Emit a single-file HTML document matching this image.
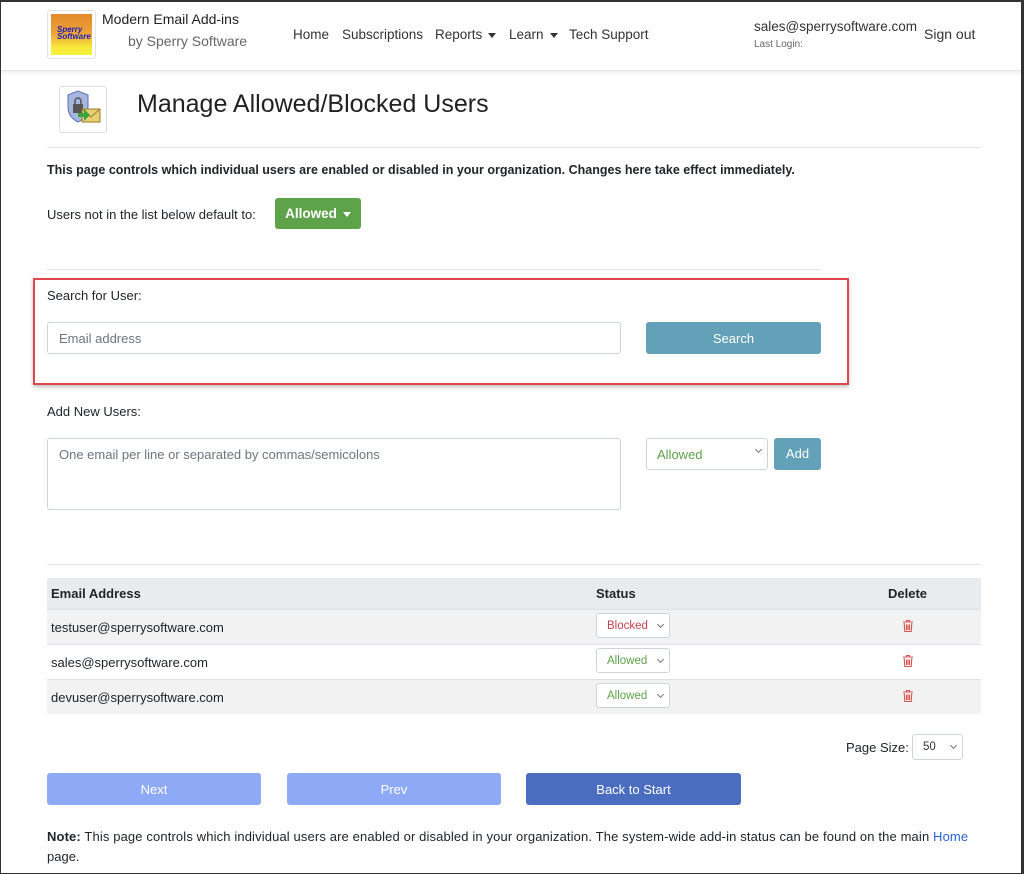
<!DOCTYPE html>
<html><head><meta charset="utf-8"><style>
*{box-sizing:border-box;margin:0;padding:0}
body{width:1024px;height:874px;overflow:hidden;background:#fff;font-family:"Liberation Sans",sans-serif;color:#212529;font-size:13px;position:relative}
.frame{position:absolute;left:0;top:0;width:1024px;height:874px;border:1px solid #333;border-right:3px solid #333;border-top:2px solid #333;pointer-events:none;z-index:10}
.a{position:absolute;white-space:nowrap}
.hdr{position:absolute;left:0;top:0;width:1024px;height:71px;background:#fff;box-shadow:0 2px 4px rgba(0,0,0,.08);border-bottom:1px solid #e5e5e5}
.nav{font-size:13.5px;color:#333}
.caret{display:inline-block;border-top:5px solid #333;border-left:4px solid transparent;border-right:4px solid transparent;vertical-align:middle;margin-left:6px}
.hr{position:absolute;height:1px;background:#e2e2e2}
.inp{position:absolute;border:1px solid #ced4da;border-radius:3px;background:#fff;color:#6c757d;font-size:13px;padding-left:11px}
.btn{position:absolute;border-radius:3px;color:#fff;font-size:13px;text-align:center}
.sel{position:absolute;border:1px solid #ced4da;border-radius:3px;background:#fff;font-size:11.5px;padding-left:10px;line-height:24px}
.sel:after{content:"";position:absolute;right:6px;top:8px;width:4px;height:4px;border-right:1px solid #777;border-bottom:1px solid #777;transform:rotate(45deg)}
.row{position:absolute;left:47px;width:934px;height:35px;border-top:1px solid #dee2e6}
.trash{position:absolute;width:10px;height:12px}
</style></head><body>
<div class="hdr"></div>
<div class="a" style="left:47px;top:10px;width:49px;height:49px;border:1px solid #e3e3e3;border-radius:3px;padding:3px"><div style="width:41px;height:41px;background:linear-gradient(180deg,#e4882a 0%,#eda53a 50%,#f7e83a 80%,#f4f23c 100%)"><div style="font:italic bold 8px 'Liberation Sans';color:#1a1ac0;padding:12px 0 0 6px;line-height:7px">Sperry<br>Software</div></div></div>
<div class="a" style="left:102px;top:11px;font-size:14px;color:#222">Modern Email Add-ins</div>
<div class="a" style="left:128px;top:33px;font-size:14px;color:#666">by Sperry Software</div>
<div class="a nav" style="left:293px;top:27px">Home</div>
<div class="a nav" style="left:342px;top:27px">Subscriptions</div>
<div class="a nav" style="left:435px;top:27px">Reports<span class="caret"></span></div>
<div class="a nav" style="left:509px;top:27px">Learn<span class="caret"></span></div>
<div class="a nav" style="left:569px;top:27px">Tech Support</div>
<div class="a" style="left:754px;top:19px;font-size:13.5px;color:#333">sales@sperrysoftware.com</div>
<div class="a" style="left:754px;top:39px;font-size:10px;color:#666">Last Login:</div>
<div class="a nav" style="left:924px;top:26px;font-size:14px">Sign out</div>

<div class="a" style="left:59px;top:86px;width:48px;height:47px;border:1px solid #ddd;border-radius:3px">
<svg width="46" height="45" viewBox="0 0 46 45"><path d="M8 8 L18 4 L28 8 L28 20 Q28 30 18 35 Q8 30 8 20Z" fill="#a7b6de" stroke="#5a6fb5"/><rect x="13" y="17" width="10" height="9" fill="#555"/><path d="M15 17 v-3 a3 3 0 0 1 6 0 v3" fill="none" stroke="#555" stroke-width="1.5"/><rect x="22" y="22" width="18" height="13" fill="#e8cf73" stroke="#9a7c2a"/><path d="M22 22 L31 30 L40 22" fill="none" stroke="#9a7c2a"/><path d="M18 26 h6 v-4 l6 6 -6 6 v-4 h-6z" fill="#3aa43a"/></svg></div>
<div class="a" style="left:137px;top:90px;font-size:25px;color:#222">Manage Allowed/Blocked Users</div>
<div class="hr" style="left:47px;top:147px;width:934px"></div>
<div class="a" style="left:47px;top:163px;font-weight:bold;font-size:12.5px">This page controls which individual users are enabled or disabled in your organization. Changes here take effect immediately.</div>
<div class="a" style="left:47px;top:207px">Users not in the list below default to:</div>
<div class="btn" style="left:275px;top:198px;width:86px;height:31px;background:#5ea34a;line-height:31px;font-weight:bold;font-size:13.5px">Allowed<span class="caret" style="border-top-color:#fff"></span></div>
<div class="hr" style="left:47px;top:269px;width:774px"></div>
<div class="a" style="left:33px;top:278px;width:816px;height:107px;border:2px solid #e0474c;box-shadow:0 2px 4px rgba(0,0,0,.25)"></div>
<div class="a" style="left:47px;top:288px">Search for User:</div>
<div class="inp" style="left:47px;top:322px;width:574px;height:32px;line-height:31px">Email address</div>
<div class="btn" style="left:646px;top:322px;width:175px;height:32px;background:#62a1b7;line-height:33px">Search</div>
<div class="a" style="left:47px;top:404px">Add New Users:</div>
<div class="inp" style="left:47px;top:438px;width:574px;height:72px;padding-top:8px">One email per line or separated by commas/semicolons</div>
<div class="sel" style="left:646px;top:438px;width:122px;height:32px;line-height:31px;font-size:13px;color:#5ea34a">Allowed</div>
<div class="btn" style="left:774px;top:438px;width:47px;height:32px;background:#62a1b7;line-height:32px">Add</div>
<div class="hr" style="left:47px;top:564px;width:934px"></div>
<div class="a" style="left:47px;top:578px;width:934px;height:31px;background:#e9ecef"></div>
<div class="a" style="left:51px;top:586px;font-weight:bold">Email Address</div>
<div class="a" style="left:596px;top:586px;font-weight:bold">Status</div>
<div class="a" style="left:888px;top:586px;font-weight:bold">Delete</div>
<div class="row" style="top:609px;background:#f2f2f2"></div>
<div class="row" style="top:644px;background:#fff"></div>
<div class="row" style="top:679px;background:#f2f2f2"></div>
<div class="a" style="left:51px;top:620px">testuser@sperrysoftware.com</div>
<div class="a" style="left:51px;top:655px">sales@sperrysoftware.com</div>
<div class="a" style="left:51px;top:690px">devuser@sperrysoftware.com</div>
<div class="sel" style="left:596px;top:613px;width:74px;height:25px;color:#c8414e">Blocked</div>
<div class="sel" style="left:596px;top:648px;width:74px;height:25px;color:#5ea34a">Allowed</div>
<div class="sel" style="left:596px;top:683px;width:74px;height:25px;color:#5ea34a">Allowed</div>
<svg class="trash" style="left:903px;top:620px" viewBox="0 0 10 12"><path d="M0 2h10M3.5 2V0.5h3V2M1.2 3l.6 8.5h6.4l.6-8.5M3.5 4.5v5.5M5 4.5v5.5M6.5 4.5v5.5" fill="none" stroke="#d9534f" stroke-width="1.1"/></svg>
<svg class="trash" style="left:903px;top:655px" viewBox="0 0 10 12"><path d="M0 2h10M3.5 2V0.5h3V2M1.2 3l.6 8.5h6.4l.6-8.5M3.5 4.5v5.5M5 4.5v5.5M6.5 4.5v5.5" fill="none" stroke="#d9534f" stroke-width="1.1"/></svg>
<svg class="trash" style="left:903px;top:690px" viewBox="0 0 10 12"><path d="M0 2h10M3.5 2V0.5h3V2M1.2 3l.6 8.5h6.4l.6-8.5M3.5 4.5v5.5M5 4.5v5.5M6.5 4.5v5.5" fill="none" stroke="#d9534f" stroke-width="1.1"/></svg>
<div class="a" style="left:846px;top:740px">Page Size:</div>
<div class="sel" style="left:912px;top:734px;width:51px;height:26px;color:#333;line-height:25px">50</div>
<div class="btn" style="left:47px;top:773px;width:214px;height:32px;background:#8eaaf7;line-height:33px">Next</div>
<div class="btn" style="left:287px;top:773px;width:214px;height:32px;background:#8eaaf7;line-height:33px">Prev</div>
<div class="btn" style="left:526px;top:773px;width:215px;height:32px;background:#4a6dbf;line-height:33px">Back to Start</div>
<div class="a" style="left:47px;top:829px;font-size:13px;letter-spacing:0.13px"><b>Note:</b> This page controls which individual users are enabled or disabled in your organization. The system-wide add-in status can be found on the main <span style="color:#2a63d4">Home</span></div>
<div class="a" style="left:47px;top:849px">page.</div>
<div class="frame"></div>
</body></html>
